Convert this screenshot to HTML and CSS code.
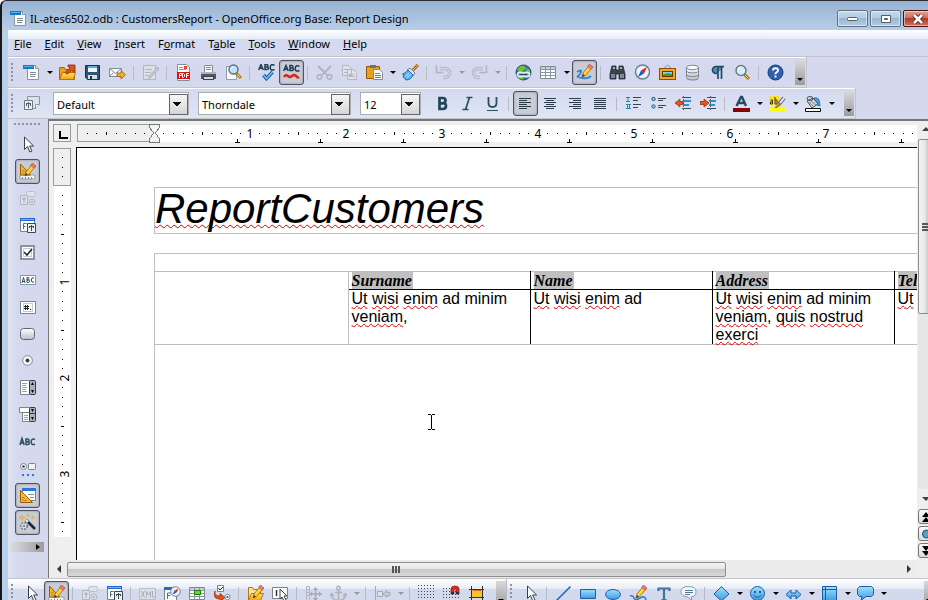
FILE: index.html
```html
<!DOCTYPE html>
<html lang="en">
<head>
  <meta charset="UTF-8">
  <meta name="viewport" content="width=device-width, initial-scale=1.0">
  <title>IL-ates6502.odb : CustomersReport - OpenOffice.org Base: Report Design</title>
  <link rel="stylesheet" href="styles.css">
</head>
<body>

<!-- icon sprite, 17x17 grid -->
<svg class="sprite" xmlns="http://www.w3.org/2000/svg" aria-hidden="true">
  <defs>
    <linearGradient id="g-blue" x1="0" y1="0" x2="0" y2="1"><stop offset="0" stop-color="#9fe0fb"/><stop offset="1" stop-color="#3a9be6"/></linearGradient>
    <linearGradient id="g-gold" x1="0" y1="0" x2="0" y2="1"><stop offset="0" stop-color="#ffe27a"/><stop offset="1" stop-color="#f2a30c"/></linearGradient>
    <linearGradient id="g-grey" x1="0" y1="0" x2="0" y2="1"><stop offset="0" stop-color="#ffffff"/><stop offset="1" stop-color="#b8bfc6"/></linearGradient>
    <pattern id="dots" width="3" height="3" patternUnits="userSpaceOnUse"><rect width="1" height="1" fill="#34495a"/></pattern>
  </defs>

  <symbol id="doc" viewBox="0 0 17 17"><path d="M4.500 1.500h8l3 3v11h-11z" fill="#fbfbfb" stroke="#8796a2"/><path d="M12.500 1.500v3h3" fill="#dfe4e8" stroke="#8796a2"/><path d="M7 8.500h6M7 10.500h6M7 12.500h5" stroke="#7f8d98"/><path d="M0 1h11v4H0z" fill="#1678c2"/><path d="M1 2h9v1H1z" fill="#58b4ee"/></symbol>
  <symbol id="open" viewBox="0 0 17 17"><path d="M.500 15.500V3.500h5l1 2h9v10z" fill="#f0a018" stroke="#a8640a"/><path d="M.500 15.500l3-7h13l-2 7z" fill="url(#g-gold)" stroke="#b9720c"/><path d="M7 9.500L6.500 8 11 4 9 2.500V1h7v7h-1.500L13 6l-4.500 4z" fill="#e4521b" stroke="#8c2206" stroke-width=".8"/></symbol>
  <symbol id="save" viewBox="0 0 17 17"><path d="M1.500 1.500h14v14h-12l-2-2z" fill="#2e5578" stroke="#16304a"/><path d="M4 2h9v6H4z" fill="#eef4f9"/><path d="M4 2h9v2H4z" fill="#5aa9e0"/><path d="M4 11h9v4H4z" fill="#d6dde3"/><path d="M6 12h2v3H6z" fill="#16304a"/></symbol>
  <symbol id="mail" viewBox="0 0 17 17"><path d="M.500 4.500h12v8H.500z" fill="#fbfbfb" stroke="#7f909c"/><path d="M.500 4.500l6 5 6-5M.500 12.500l4-4M12.500 12.500l-4-4" fill="none" stroke="#7f909c"/><path d="M8 9h4V6.500l4.500 4.300L12 15v-2.500H8z" fill="#f6ad25" stroke="#9a5c07" stroke-width=".8"/></symbol>
  <symbol id="edit-off" viewBox="0 0 17 17"><path d="M1.500 1.500h12v14h-12z" fill="#dcdfe8" stroke="#b2b6c1"/><path d="M3 5.500h7M3 8.500h6M3 11.500h4" stroke="#b2b6c1"/><path d="M15.500 3l-8 9-1 2.500L9 13l8-8z" fill="#c9ccd5" stroke="#a2a6b0" stroke-width=".8"/></symbol>
  <symbol id="pdf" viewBox="0 0 17 17"><path d="M2.500.500h9l3 3v13h-12z" fill="#fdfdfd" stroke="#80909b"/><path d="M4 3.500h4M4 5.500h7" stroke="#8796a2"/><path d="M9 2h3v3H9z" fill="#d94c2c"/><path d="M2 8h13v7H2z" fill="#d8140c"/><path d="M4.500 14V9.500h2v2h-2M7.500 13.500v-4h1l1 1v2l-1 1zM11.500 14V9.500h2.500M11.500 11.500h2" fill="none" stroke="#fff"/></symbol>
  <symbol id="print" viewBox="0 0 17 17"><path d="M4.500 1.500h8v7h-8z" fill="#fff" stroke="#7f8d98"/><path d="M6 3.500h5M6 5.500h5" stroke="#4a9bd6"/><path d="M1 8h15v7H1z" fill="#4c5961"/><path d="M1 8h15v2H1z" fill="#a9b4bb"/><path d="M3 12h11v4H3z" fill="#3a464f"/><path d="M4 13h9v2H4z" fill="#d5dce1"/></symbol>
  <symbol id="preview" viewBox="0 0 17 17"><path d="M1.500 2.500h10v13h-10z" fill="#fafafa" stroke="#8e9ba5"/><path d="M11 9l5 5" stroke="#c07b12" stroke-width="3"/><path d="M11 9l4 4" stroke="#ffd257"/><circle cx="8.500" cy="5.500" r="4.500" fill="#bfe2f8" stroke="#59707f" stroke-width="1.400"/><path d="M6 5a3 3 0 0 1 3-2" stroke="#fff" fill="none"/></symbol>
  <symbol id="abc" viewBox="0 0 17 17"><g fill="none" stroke="#1d3d52" stroke-width="1.500"><path d="M.700 7L3 1.500 5.300 7M1.500 5.300h3M7 1.500v5h2q1.500 0 1.500-1.300T9 4H7h1.700Q10 4 9.900 2.700T8.500 1.600zM16.500 2.300q-4-2-4.200 2t4.200 2.200"/></g></symbol>
  <symbol id="spell" viewBox="0 0 17 17"><use href="#abc" y="-1"/><path d="M5.500 11l3 3.500 6-6.500" fill="none" stroke="#165a9c" stroke-width="3.500"/><path d="M5.500 11l3 3.500 6-6.500" fill="none" stroke="#6fc3f5" stroke-width="1.500"/></symbol>
  <symbol id="autospell" viewBox="0 0 17 17"><use href="#abc"/><path d="M1 13q2-3 4-1t4 0 4 0 3 1" fill="none" stroke="#e02418" stroke-width="2.500"/></symbol>
  <symbol id="cut" viewBox="0 0 17 17"><path d="M2 2l9 9M15 2l-9 9" stroke="#b0b4bf" stroke-width="1.800"/><circle cx="3.500" cy="13" r="2.300" fill="none" stroke="#b0b4bf" stroke-width="1.500"/><circle cx="13.500" cy="13" r="2.300" fill="none" stroke="#b0b4bf" stroke-width="1.500"/></symbol>
  <symbol id="copy" viewBox="0 0 17 17"><path d="M1.500 1.500h6l3 3v7h-9zM6.500 5.500h6l3 3v7h-9z" fill="#dfe2eb" stroke="#b2b6c1"/><path d="M3 5.500h4M3 8.500h3M8 10.500h5M8 12.500h6" stroke="#b2b6c1"/></symbol>
  <symbol id="paste" viewBox="0 0 17 17"><path d="M.500 2.500h13v12H.500z" fill="#e9a01c" stroke="#8d5a0b"/><path d="M4 1h6v3H4z" fill="#68747d"/><path d="M7.500 5.500h6l3 3v7h-9z" fill="#fff" stroke="#7f8d98"/><path d="M9 9.500h5M9 11.500h6M9 13.500h6" stroke="#3b8dcb"/></symbol>
  <symbol id="brush" viewBox="0 0 17 17"><path d="M16 1l-5 5" stroke="#a35c0a" stroke-width="3"/><path d="M16 1l-5 5" stroke="#ffc54a"/><path d="M8 4l5 5-2 3-6-6z" fill="#d7e3ec" stroke="#56748a" stroke-width=".8"/><path d="M6 6l5 5q-2 5-7 5-1-2-3-3l1-2-1.500-1Q4 9 6 6z" fill="#5cb3ec" stroke="#1c5e97" stroke-width=".9"/><path d="M3 13l4-4M5 14l4-4" stroke="#bfe5fb"/></symbol>
  <symbol id="undo" viewBox="0 0 17 17"><path d="M5 4.500h5a4.300 4.300 0 0 1 0 9H8" fill="none" stroke="#b0b4bf" stroke-width="3.400"/><path d="M5 4.500h5a4.300 4.300 0 0 1 0 9H8" fill="none" stroke="#d3d8e8" stroke-width="1.400"/><path d="M1.500 1.500v7h7" fill="none" stroke="#b0b4bf" stroke-width="1.600"/></symbol>
  <symbol id="redo" viewBox="0 0 17 17"><path d="M12 4.500H7a4.300 4.300 0 0 0 0 9h2" fill="none" stroke="#b0b4bf" stroke-width="3.400"/><path d="M12 4.500H7a4.300 4.300 0 0 0 0 9h2" fill="none" stroke="#d3d8e8" stroke-width="1.400"/><path d="M15.500 1.500v7h-7" fill="none" stroke="#b0b4bf" stroke-width="1.600"/></symbol>
  <symbol id="globe" viewBox="0 0 17 17"><circle cx="8.500" cy="8.500" r="7.500" fill="#3579a6" stroke="#1e4b68"/><path d="M2 6q3-5 7-4l2 2-3 3-3 1zM11 4l4 2v3l-3-1zM5 12l4 1-1 2.500q-4 0-5-3z" fill="#6fbf3a"/><rect x="2.500" y="8.500" width="6" height="4" rx="2" fill="none" stroke="#e9eef1" stroke-width="1.800"/><rect x="8.500" y="8.500" width="6" height="4" rx="2" fill="none" stroke="#e9eef1" stroke-width="1.800"/><path d="M6 10.500h5" stroke="#26414f" stroke-width="1.400"/></symbol>
  <symbol id="table" viewBox="0 0 17 17"><path d="M.500 2.500h15v12H.500z" fill="#fff" stroke="#7a8994"/><path d="M1 3h14v2H1z" fill="#c6d0d8"/><path d="M.500 5.500h15M.500 8.500h15M.500 11.500h15M5.500 2.500v12M10.500 2.500v12" stroke="#8796a2"/></symbol>
  <symbol id="pencil" viewBox="0 0 17 17"><path d="M13.500 1l3 2.500-7 8-3.500 1.500L7 9z" fill="#ffd23c" stroke="#8f6410" stroke-width=".8"/><path d="M13.500 0l3.500 3-2 2.300-3.500-3z" fill="#e87a74" stroke="#a33" stroke-width=".5"/><path d="M6 13l1-3 2 1.500z" fill="#3a3a3a"/></symbol>
  <symbol id="draw" viewBox="0 0 17 17"><path d="M1 8q5-3 4 0t-3 4 4 2 9-2" fill="none" stroke="#2e86d9" stroke-width="1.800"/><use href="#pencil"/></symbol>
  <symbol id="find" viewBox="0 0 17 17"><path d="M3 2h4v4h3V2h4l2 8v5h-6v-5H7v5H1v-5z" fill="#39434a" stroke="#1f272c" stroke-width=".8"/><path d="M2 10h4v4H2zM11 10h4v4h-4z" fill="#7d8b94"/><path d="M4 3h2v2H4zM11 3h2v2h-2z" fill="#aab5bc"/></symbol>
  <symbol id="compass" viewBox="0 0 17 17"><circle cx="8.500" cy="8" r="7" fill="#e7f2fa" stroke="#6d8292" stroke-width="1.500"/><path d="M13 3L7 6.500 10 9.500z" fill="#ec1b12"/><path d="M4 13l3-6.500 3 3z" fill="#1e52c8"/></symbol>
  <symbol id="gallery" viewBox="0 0 17 17"><path d="M5 4l3.500-3L12 4" fill="none" stroke="#8898a3"/><path d="M0 4h17v12H0z" fill="#8f4d06"/><path d="M1 5h15v10H1z" fill="#f2a72a"/><path d="M3 7h11v6H3z" fill="#5f3a0a"/><path d="M4 8h9v4H4z" fill="#8ed0f5"/><path d="M4 10.500q4-2 9-.500v2H4z" fill="#3f9a34"/></symbol>
  <symbol id="database" viewBox="0 0 17 17"><path d="M2.500 3.500v10q0 2.500 6 2.500t6-2.500v-10" fill="url(#g-grey)" stroke="#7a858e"/><ellipse cx="8.500" cy="3.500" rx="6" ry="2.200" fill="#fafbfc" stroke="#7a858e"/><path d="M2.500 7q0 2 6 2t6-2M2.500 10.500q0 2 6 2t6-2" fill="none" stroke="#7a858e"/></symbol>
  <symbol id="pilcrow" viewBox="0 0 17 17"><path d="M15 2.500H7a3.500 3.500 0 0 0 0 7h1M9 2v13M12.500 2v13" fill="#4d8fb5" stroke="#1f4964" stroke-width="1.700"/></symbol>
  <symbol id="zoom" viewBox="0 0 17 17"><path d="M10 10l5 5" stroke="#a8700e" stroke-width="3"/><path d="M11 11l3.500 3.500" stroke="#ffd654"/><circle cx="7" cy="6.500" r="5" fill="#d5eefc" stroke="#667d8d" stroke-width="1.500"/><path d="M4 6a3 3 0 0 1 3-3" fill="none" stroke="#fff"/></symbol>
  <symbol id="help" viewBox="0 0 17 17"><circle cx="8.500" cy="8.500" r="7.500" fill="#2f5fae" stroke="#173a78"/><path d="M6 6.500q0-2.300 2.600-2.300T11 6.300q0 1.300-1.400 2T8.500 10.300M8.500 11.500v2" fill="none" stroke="#fff" stroke-width="1.900"/></symbol>

  <symbol id="styles" viewBox="0 0 17 17"><path d="M4.500 1.500h12v8l-4 4h-8z" fill="#dde1e8" stroke="#8796a2"/><path d="M12.500 13.500v-4h4" fill="#fff" stroke="#8796a2"/><path d="M1.500 5.500h8v9h-8z" fill="#eceff2" stroke="#6b7a85"/><path d="M5.500 7v6M3 8.500h5M3.500 8v3M7.500 8v3" stroke="#54646f"/></symbol>
  <symbol id="bold" viewBox="0 0 17 17"><path d="M5.500 3v11h3q3.500 0 3.500-3T9 8.300H5.500h3q3 0 3-2.700T8.500 3z" fill="none" stroke="#22445a" stroke-width="2.700"/></symbol>
  <symbol id="italic" viewBox="0 0 17 17"><path d="M7.500 2.500h6M3.500 14.500h6M10.500 2.500l-4 12" fill="none" stroke="#2d4d62" stroke-width="1.700"/></symbol>
  <symbol id="underline" viewBox="0 0 17 17"><path d="M4.500 2v6q0 4 4 4t4-4V2" fill="none" stroke="#2d4d62" stroke-width="1.800"/><path d="M3 15.500h11" stroke="#2d4d62"/></symbol>
  <symbol id="al" viewBox="0 0 17 17"><path d="M2 3.500h12M2 5.500h8M2 7.500h12M2 9.500h8M2 11.500h12M2 13.500h8" stroke="#2c3c48"/></symbol>
  <symbol id="ac" viewBox="0 0 17 17"><path d="M2 3.500h12M4 5.500h8M2 7.500h12M4 9.500h8M2 11.500h12M4 13.500h8" stroke="#2c3c48"/></symbol>
  <symbol id="ar" viewBox="0 0 17 17"><path d="M2 3.500h12M6 5.500h8M2 7.500h12M6 9.500h8M2 11.500h12M6 13.500h8" stroke="#2c3c48"/></symbol>
  <symbol id="aj" viewBox="0 0 17 17"><path d="M2 3.500h12M2 5.500h12M2 7.500h12M2 9.500h12M2 11.500h12M2 13.500h12" stroke="#2c3c48"/></symbol>
  <symbol id="numbering" viewBox="0 0 17 17"><path d="M1 2.500h4M1 6.500h4M3 2.500v4M1 9.500h5M1 13.500h5M2.500 9.500v4M4.500 9.500v4" stroke="#387ea8"/><path d="M8 2.500h8M8 5.500h5M8 9.500h8M8 12.500h5" stroke="#3d4750"/></symbol>
  <symbol id="bullets" viewBox="0 0 17 17"><circle cx="3.500" cy="4" r="1.700" fill="#9dcbe5" stroke="#235a80"/><circle cx="3.500" cy="11.500" r="1.700" fill="#9dcbe5" stroke="#235a80"/><path d="M8 3.500h8M8 5.500h5M8 10.500h8M8 12.500h5" stroke="#3d4750"/></symbol>
  <symbol id="outdent" viewBox="0 0 17 17"><path d="M7 2.500h9M7 13.500h9" stroke="#3d4750"/><path d="M8 6h8M8 10h6" stroke="#2a93d5" stroke-width="2"/><path d="M8.500 1v15" stroke="#53626d" stroke-dasharray="2 1"/><path d="M8 6.500H5V4L0 8l5 4V9.500h3z" fill="#e35420" stroke="#8c2a08" stroke-width=".7"/></symbol>
  <symbol id="indent" viewBox="0 0 17 17"><path d="M7 2.500h9M7 13.500h9" stroke="#3d4750"/><path d="M9 6h7M9 10h6" stroke="#2a93d5" stroke-width="2"/><path d="M10.500 1v15" stroke="#53626d" stroke-dasharray="2 1"/><path d="M0 6.500h4V4l5 4-5 4V9.500H0z" fill="#e35420" stroke="#8c2a08" stroke-width=".7"/></symbol>
  <symbol id="fontcolor" viewBox="0 0 17 17"><path d="M3.500 11L8 2h1l4 9M5.500 8h6" fill="none" stroke="#254b64" stroke-width="2.400"/><path d="M0 13h17v4H0z" fill="#8b0008"/></symbol>
  <symbol id="highlight" viewBox="0 0 17 17"><path d="M0 1h10v9H0z" fill="#ffdf2e"/><path d="M1.500 5h2v4h-2V7h2M6 2v7h2V5H6" fill="none" stroke="#3b3b22"/><path d="M15 3l-5 6" stroke="#62707a" stroke-width="4"/><path d="M15 3l-4 5" stroke="#e8eef2" stroke-width="2"/><path d="M10 8l2 2-4 3-3 0z" fill="#c2760e"/><path d="M0 13h16v4H0z" fill="#ffff00"/></symbol>
  <symbol id="bucket" viewBox="0 0 17 17"><path d="M9 3q6-2 6 8l-3-1q0-4-3-5z" fill="#3f9ede" stroke="#1f5f92" stroke-width=".7"/><path d="M2 6l6-3 5 6-6 4z" fill="#cfd7dd" stroke="#46535d"/><ellipse cx="5" cy="3.500" rx="3" ry="2" fill="none" stroke="#46535d"/><path d="M4 7l5 5M6 6l5 4" stroke="#7c8a94"/><path d="M.500 13.500h15v3H.500z" fill="#fff" stroke="#111"/></symbol>

  <symbol id="pointer" viewBox="0 0 17 17"><path d="M5.500 1v12.500l3-3 2.300 5.500 2.200-1-2.400-5h4z" fill="#fff" stroke="#34424d"/></symbol>
  <symbol id="design" viewBox="0 0 17 17"><path d="M1 12h15v4H1z" fill="#f3f5f6" stroke="#81909a" stroke-width=".8"/><path d="M3.500 14v2M6.500 14v2M9.500 14v2M12.500 14v2" stroke="#81909a"/><path d="M1.500 12V1l10 11z" fill="#f8b424" stroke="#9a5d06"/><path d="M4 7v3h3z" fill="#f3e6c4" stroke="#9a5d06" stroke-width=".6"/><use href="#pencil"/></symbol>
  <symbol id="control-off" viewBox="0 0 17 17"><rect x="7.500" y="1.500" width="9" height="5" rx="2" fill="#dfe2eb" stroke="#bcc0cb"/><path d="M1.500 5.500h7v9h-7z" fill="#dfe2eb" stroke="#b2b6c1"/><path d="M5 7v6M3 9h4" stroke="#a5a9b5"/><circle cx="13" cy="12" r="2.800" fill="#dfe2eb" stroke="#b2b6c1"/><circle cx="13" cy="12" r="1" fill="#a5a9b5"/></symbol>
  <symbol id="form" viewBox="0 0 17 17"><path d="M1.500 2.500h14v12h-14z" fill="#fafbfc" stroke="#77858f"/><path d="M1 1h15v3H1z" fill="#2667cf"/><path d="M2 2h13v1H2z" fill="#78b2ff"/><path d="M4.500 12V6.500h3M4.500 9.500h2" fill="none" stroke="#5c6a75"/><path d="M8.500 6.500h8v9h-8z" fill="#eef1f4" stroke="#3a4852"/><path d="M12.500 8v6M10 9.500h5M10.500 9v2M14.500 9v2" stroke="#3a4852"/></symbol>
  <symbol id="check" viewBox="0 0 17 17"><path d="M2 2h13v13H2z" fill="#fff" stroke="#8796a2" stroke-width="2"/><path d="M4.500 4.500h8v8h-8z" fill="#fff" stroke="#c3cbd1"/><path d="M5 8l3 3 5-6" fill="none" stroke="#1c262e" stroke-width="1.600"/></symbol>
  <symbol id="textfield" viewBox="0 0 17 17"><path d="M1.500 4.500h15v9h-15z" fill="#fff" stroke="#8796a2"/><g fill="none" stroke="#2d4d62"><path d="M3 12l1.500-5.500L6 12M3.500 10.500H6M8 6.500v5h1.500q1 0 1-1.300T9.500 9H8h1q1 0 1-1.300t-1-1.200zM15 7q-2.700-1-2.700 2t2.700 2"/></g></symbol>
  <symbol id="formatted" viewBox="0 0 17 17"><path d="M1.500 3.500h15v12h-15z" fill="#fff" stroke="#75848f"/><path d="M4.500 5.500h9v8h-9z" fill="#fff" stroke="#c3cbd1"/><path d="M6.500 7v5M8.500 7v5M5 8.500h5M5 10.500h5M11 11.500h1" stroke="#222"/></symbol>
  <symbol id="pushbutton" viewBox="0 0 17 17"><rect x="1.500" y="3.500" width="14" height="11" rx="3" fill="url(#g-grey)" stroke="#5b6872"/></symbol>
  <symbol id="radio" viewBox="0 0 17 17"><circle cx="8.500" cy="8.500" r="4.800" fill="#fff" stroke="#77858f"/><circle cx="8.500" cy="8.500" r="2" fill="#33414c"/></symbol>
  <symbol id="listbox" viewBox="0 0 17 17"><path d="M1.500 1.500h9v14h-9z" fill="#fff" stroke="#77858f"/><path d="M3 4.500h5M3 6.500h4M3 8.500h5M3 10.500h4M3 12.500h5" stroke="#98a4ad"/><rect x="10.500" y="1.500" width="6" height="14" rx="1" fill="#a9b3ba" stroke="#2f3b44"/><path d="M12 6l1.500-3L15 6zM12 11l1.500 3L15 11z" fill="#000"/></symbol>
  <symbol id="combobox" viewBox="0 0 17 17"><path d="M3.500 6.500h8v9h-8z" fill="#fff" stroke="#77858f"/><path d="M5 9.500h4M5 11.500h4M5 13.500h4" stroke="#98a4ad"/><path d="M.500 1.500h10v5H.500z" fill="#fff" stroke="#77858f"/><rect x="10.500" y="1.500" width="6" height="14" rx="1" fill="#a9b3ba" stroke="#2f3b44"/><path d="M12 3l1.500 3L15 3zM12 11l1.500 3L15 11z" fill="#000"/><path d="M11 7.500h5" stroke="#2f3b44"/></symbol>
  <symbol id="label" viewBox="0 0 17 17"><g fill="none" stroke="#2d4d62" stroke-width="1.500"><path d="M1 12l2-6.500L5.200 12M1.800 10h3M7 6v5.500h1.800q1.500 0 1.500-1.500T8.800 8.700H7h1.500q1.500 0 1.500-1.400T8.500 6zM16 6.500q-3.800-1.500-3.800 2.300T16 11.200"/></g></symbol>
  <symbol id="morecontrols" viewBox="0 0 17 17"><circle cx="4.500" cy="6.500" r="3" fill="#fff" stroke="#77858f"/><circle cx="4.500" cy="6.500" r="1.300" fill="#33414c"/><rect x="9.500" y="3.500" width="7" height="6" rx="1" fill="#f1f3f5" stroke="#77858f"/><path d="M3 14h2v2H3zM8 14h2v2H8zM13 14h2v2h-2z" fill="#2a78e4"/></symbol>
  <symbol id="formdesign" viewBox="0 0 17 17"><path d="M3.500 1.500h13v12h-13z" fill="#fafbfc" stroke="#77858f"/><path d="M3 1h14v3H3z" fill="#2e74da"/><path d="M9 7.500h6M11 10.500h4" stroke="#8796a2"/><path d="M1.500 15.500V3.500l12 12z" fill="#fbb92b" stroke="#9a5d06"/><path d="M4 10v3.500h3.500z" fill="#f4f4f4" stroke="#9a5d06" stroke-width=".7"/></symbol>
  <symbol id="wizard" viewBox="0 0 17 17"><path d="M7 6l9 9" stroke="#20272c" stroke-width="2.600"/><path d="M7 6l2 2" stroke="#f4f4f4" stroke-width="2"/><circle cx="5" cy="12" r="3.200" fill="#e4e8eb" stroke="#7d8a94" stroke-width="2" stroke-dasharray="2 1"/><circle cx="5" cy="12" r="1" fill="#56636d"/><path d="M3 1l1 2 2 .500-2 1-1 2-1-2-2-1L2 3zM9 0l1 1.500L9 3 8 1.500zM14 2l1.500 1.500L14 5l-1.500-1.500z" fill="#ffc21c" stroke="#d98d08" stroke-width=".4"/></symbol>

  <symbol id="xml" viewBox="0 0 17 17"><path d="M.500 3.500h16v11H.500z" fill="#dcdfe8" stroke="#b8bcc7"/><path d="M2.500 6l3 6.500M5.500 6l-3 6.500M7.500 12.500V6.500L9.500 10l2-3.500v6M13.500 6v6h2.500" fill="none" stroke="#abafba"/></symbol>
  <symbol id="navigator" viewBox="0 0 17 17"><path d="M.500 2.500h12v13H.500z" fill="#fafbfc" stroke="#77858f"/><path d="M0 2h11v3H0z" fill="#2667cf"/><path d="M3.500 14V8h4M3.500 10.500h3" fill="none" stroke="#5c6a75"/><circle cx="11.500" cy="6.500" r="4.800" fill="#eaf4fb" stroke="#6d8292"/><path d="M14.500 3.500L10.500 5.500 12.500 7.500z" fill="#ec1b12"/><path d="M8.500 9.500l2-4 2 2z" fill="#1e52c8"/></symbol>
  <symbol id="addfield" viewBox="0 0 17 17"><use href="#table"/><path d="M5.500 5.500h6v4h-6z" fill="#62e01d" stroke="#1f7d10"/></symbol>
  <symbol id="order" viewBox="0 0 17 17"><path d="M3.500.500h6v6h-6z" fill="#fff" stroke="#77858f"/><path d="M4.500 3l1.500 2 3-3" fill="none" stroke="#222"/><circle cx="13.500" cy="12" r="2.700" fill="#fff" stroke="#77858f"/><circle cx="13.500" cy="12" r="1.100" fill="#33414c"/><path d="M1 6q-1 5 5 5V8.500l5 4-5 4V14Q-2 14 1 6z" fill="#e8501b" stroke="#8c2a08" stroke-width=".7"/></symbol>
  <symbol id="opendesign" viewBox="0 0 17 17"><path d="M1.500 15.500v-13h4l1 2h7v11z" fill="#fbe29a" stroke="#b9720c"/><path d="M1.500 15.500l3-7h12l-3 7z" fill="url(#g-gold)" stroke="#b9720c"/><use href="#pencil"/></symbol>
  <symbol id="autofocus" viewBox="0 0 17 17"><path d="M.500 2.500h15v11H.500z" fill="#fff" stroke="#77858f"/><path d="M4.500 5v6" stroke="#333" stroke-width="1.500"/><path d="M8 4v10l2-2 2 4 2-1-2-4h3z" fill="#fff" stroke="#34424d"/></symbol>
  <symbol id="position" viewBox="0 0 17 17"><path d="M1.500 1.500h3v14h-3zM2 4.500h2M2 7.500h2M2 10.500h2" fill="none" stroke="#b2b6c1"/><path d="M10.500 3v12M5 9h12" stroke="#a5a9b5" stroke-width="1.500"/><path d="M8 5l2.500-3L13 5zM8 13l2.500 3 2.500-3zM7 6.500L4.500 9 7 11.500zM14 6.500L16.500 9 14 11.500z" fill="#a5a9b5"/></symbol>
  <symbol id="anchor" viewBox="0 0 17 17"><circle cx="8.500" cy="3" r="1.800" fill="none" stroke="#b0b4bf" stroke-width="1.500"/><path d="M8.500 5v11M5 7.500h7M1.500 9q0 6 7 6.500 7-.500 7-6.500M0 11l1.500-2.500L4 11M13 11l2.500-2.500L17 11" fill="none" stroke="#b0b4bf" stroke-width="1.600"/></symbol>
  <symbol id="align" viewBox="0 0 17 17"><path d="M1.500 1v15" stroke="#a5a9b5"/><path d="M3.500 6.500h5v5h-5z" fill="#dfe2eb" stroke="#a5a9b5"/><path d="M16 7.500h-3v-2l-4 3.500 4 3.500v-2h3z" fill="#c8ccd6" stroke="#a5a9b5"/></symbol>
  <symbol id="grid" viewBox="0 0 17 17"><path d="M0 0h17v17H0z" fill="url(#dots)"/></symbol>
  <symbol id="snap" viewBox="0 0 17 17"><path d="M0 3h17v14H0z" fill="url(#dots)"/><path d="M8 9V4q0-3 4-3t4 3v5h-3V4h-2v5z" fill="#e42a18" stroke="#8f1008" stroke-width=".7"/><path d="M8 7h3v2H8zM13 7h3v2h-3z" fill="#26323b"/></symbol>
  <symbol id="guides" viewBox="0 0 17 17"><path d="M4 5h10v7H4z" fill="#fbc02d"/><path d="M3.500 1v15M14.500 1v15M1 4.500h15M1 12.500h15" stroke="#28343c"/><path d="M5 5.500h8" stroke="#d96b0c"/></symbol>
  <symbol id="line" viewBox="0 0 17 17"><path d="M1.500 15.500l14-14" stroke="#1e6fc4" stroke-width="1.700"/></symbol>
  <symbol id="rect" viewBox="0 0 17 17"><path d="M.500 4.500h15v9H.500z" fill="url(#g-blue)" stroke="#1c5da6"/></symbol>
  <symbol id="ellipse" viewBox="0 0 17 17"><ellipse cx="8" cy="9.500" rx="7.500" ry="5" fill="url(#g-blue)" stroke="#1c5da6"/></symbol>
  <symbol id="freeform" viewBox="0 0 17 17"><path d="M0 11q3-1 4 2t6 0 6 2" fill="none" stroke="#2f7fc2" stroke-width="1.700"/><use href="#pencil"/></symbol>
  <symbol id="text" viewBox="0 0 17 17"><path d="M3.500 6V3.500h11V6M9 3.500v11M6.500 15h5" fill="none" stroke="#437596" stroke-width="2.200"/></symbol>
  <symbol id="callout" viewBox="0 0 17 17"><path d="M8.500 1.500q7.500 0 7.500 5t-5 5.500l1 4-4-4Q1 11.500 1 6.500t7.500-5z" fill="#f4f6f8" stroke="#8c99a3"/><path d="M5 5.500h8M5 7.500h8M5 9.500h5" stroke="#52799a"/></symbol>
  <symbol id="diamond" viewBox="0 0 17 17"><path d="M8.500 1.500L16 9l-7.500 7L1 9z" fill="url(#g-blue)" stroke="#1c5da6"/></symbol>
  <symbol id="smiley" viewBox="0 0 17 17"><circle cx="8.500" cy="8.500" r="7" fill="url(#g-blue)" stroke="#1c5da6"/><path d="M5 6h2v2H5zM10 6h2v2h-2z" fill="#1c5da6"/><path d="M4.500 10q4 4.500 8 0" fill="none" stroke="#1c5da6"/></symbol>
  <symbol id="arrows" viewBox="0 0 17 17"><path d="M1 9.500L6 5v3h5V5l5 4.500-5 4.500v-3H6v3z" fill="url(#g-blue)" stroke="#1c5da6"/></symbol>
  <symbol id="flow" viewBox="0 0 17 17"><path d="M1.500 1.500h14v15h-14z" fill="url(#g-blue)" stroke="#1c5da6"/><path d="M4.500 1.500v15M1.500 4.500h14" stroke="#1c5da6"/></symbol>
  <symbol id="bubble" viewBox="0 0 17 17"><path d="M2.500 1.500h12l2 2v6l-2 2H9l-5 4 1-4H2.500l-2-2v-6z" fill="url(#g-blue)" stroke="#1c5da6"/></symbol>
</svg>

<div class="window">
  <header class="titlebar">
    <svg class="app-icon"><use href="#doc"/></svg>
    <h1>IL-ates6502.odb : CustomersReport - OpenOffice.org Base: Report Design</h1>
    <div class="caption-buttons">
      <button aria-label="Minimize"><svg width="12" height="6"><rect x=".5" y="1.500" width="10" height="3" rx="1" fill="#fff" stroke="#535d6b"/></svg></button>
      <button aria-label="Maximize"><svg width="12" height="10"><path d="M1.500 1.500h9v7h-9z" fill="#fff" stroke="#535d6b"/><path d="M4.500 4.500h3v1h-3z" fill="#a0b6cd" stroke="#535d6b"/></svg></button>
      <button class="close" aria-label="Close"><svg width="12" height="10"><path d="M2 1l8 8M10 1L2 9" stroke="#5b2a2a" stroke-width="4.500"/><path d="M2 1l8 8M10 1L2 9" stroke="#fff" stroke-width="2.500"/></svg></button>
    </div>
  </header>

  <div class="client">
    <nav class="menubar">
      <button><u>F</u>ile</button>
      <button><u>E</u>dit</button>
      <button><u>V</u>iew</button>
      <button><u>I</u>nsert</button>
      <button>F<u>o</u>rmat</button>
      <button>T<u>a</u>ble</button>
      <button><u>T</u>ools</button>
      <button><u>W</u>indow</button>
      <button><u>H</u>elp</button>
    </nav>

    <div class="toolbar standard">
      <span class="grip"></span>
      <button class="tool" aria-label="New"><svg><use href="#doc"/></svg></button>
      <button class="drop" aria-label="New menu"></button>
      <button class="tool" aria-label="Open"><svg><use href="#open"/></svg></button>
      <button class="tool" aria-label="Save"><svg><use href="#save"/></svg></button>
      <button class="tool" aria-label="E-mail"><svg><use href="#mail"/></svg></button>
      <span class="sep"></span>
      <button class="tool" aria-label="Edit File" disabled><svg><use href="#edit-off"/></svg></button>
      <span class="sep"></span>
      <button class="tool" aria-label="Export as PDF"><svg><use href="#pdf"/></svg></button>
      <button class="tool" aria-label="Print"><svg><use href="#print"/></svg></button>
      <button class="tool" aria-label="Page Preview"><svg><use href="#preview"/></svg></button>
      <span class="sep"></span>
      <button class="tool" aria-label="Spellcheck"><svg><use href="#spell"/></svg></button>
      <button class="tool pressed" aria-label="AutoSpellcheck"><svg><use href="#autospell"/></svg></button>
      <span class="sep"></span>
      <button class="tool" aria-label="Cut" disabled><svg><use href="#cut"/></svg></button>
      <button class="tool" aria-label="Copy" disabled><svg><use href="#copy"/></svg></button>
      <button class="tool" aria-label="Paste"><svg><use href="#paste"/></svg></button>
      <button class="drop" aria-label="Paste menu"></button>
      <button class="tool" aria-label="Format Paintbrush"><svg><use href="#brush"/></svg></button>
      <span class="sep"></span>
      <button class="tool" aria-label="Undo" disabled><svg><use href="#undo"/></svg></button>
      <button class="drop" aria-label="Undo list" disabled></button>
      <button class="tool" aria-label="Redo" disabled><svg><use href="#redo"/></svg></button>
      <button class="drop" aria-label="Redo list" disabled></button>
      <span class="sep"></span>
      <button class="tool" aria-label="Hyperlink"><svg><use href="#globe"/></svg></button>
      <button class="tool" aria-label="Table"><svg><use href="#table"/></svg></button>
      <button class="drop" aria-label="Table menu"></button>
      <button class="tool pressed" aria-label="Show Draw Functions"><svg><use href="#draw"/></svg></button>
      <span class="sep"></span>
      <button class="tool" aria-label="Find and Replace"><svg><use href="#find"/></svg></button>
      <button class="tool" aria-label="Navigator"><svg><use href="#compass"/></svg></button>
      <button class="tool" aria-label="Gallery"><svg><use href="#gallery"/></svg></button>
      <button class="tool" aria-label="Data Sources"><svg><use href="#database"/></svg></button>
      <button class="tool" aria-label="Nonprinting Characters"><svg><use href="#pilcrow"/></svg></button>
      <button class="tool" aria-label="Zoom"><svg><use href="#zoom"/></svg></button>
      <span class="sep"></span>
      <button class="tool" aria-label="Help"><svg><use href="#help"/></svg></button>
      <button class="more" aria-label="Toolbar options"></button>
    </div>

    <div class="toolbar formatting">
      <span class="grip"></span>
      <button class="tool" aria-label="Styles and Formatting"><svg><use href="#styles"/></svg></button>
      <span class="combo combo-style"><select aria-label="Apply Style"><option>Default</option><option>Heading 1</option></select></span>
      <span class="combo combo-font"><select aria-label="Font Name"><option>Thorndale</option><option>Albany</option></select></span>
      <span class="combo combo-size"><select aria-label="Font Size"><option>12</option><option>14</option></select></span>
      <button class="tool" aria-label="Bold"><svg><use href="#bold"/></svg></button>
      <button class="tool" aria-label="Italic"><svg><use href="#italic"/></svg></button>
      <button class="tool" aria-label="Underline"><svg><use href="#underline"/></svg></button>
      <span class="sep"></span>
      <button class="tool pressed" aria-label="Align Left"><svg><use href="#al"/></svg></button>
      <button class="tool" aria-label="Centered"><svg><use href="#ac"/></svg></button>
      <button class="tool" aria-label="Align Right"><svg><use href="#ar"/></svg></button>
      <button class="tool" aria-label="Justified"><svg><use href="#aj"/></svg></button>
      <span class="sep"></span>
      <button class="tool" aria-label="Numbering"><svg><use href="#numbering"/></svg></button>
      <button class="tool" aria-label="Bullets"><svg><use href="#bullets"/></svg></button>
      <button class="tool" aria-label="Decrease Indent"><svg><use href="#outdent"/></svg></button>
      <button class="tool" aria-label="Increase Indent"><svg><use href="#indent"/></svg></button>
      <span class="sep"></span>
      <button class="tool" aria-label="Font Color"><svg><use href="#fontcolor"/></svg></button>
      <button class="drop" aria-label="Font Color menu"></button>
      <button class="tool" aria-label="Highlighting"><svg><use href="#highlight"/></svg></button>
      <button class="drop" aria-label="Highlighting menu"></button>
      <button class="tool" aria-label="Background Color"><svg><use href="#bucket"/></svg></button>
      <button class="drop" aria-label="Background Color menu"></button>
      <button class="more" aria-label="Toolbar options"></button>
    </div>

    <div class="main">
      <aside class="controls">
        <span class="grip-h"></span>
        <button class="tool" aria-label="Select"><svg><use href="#pointer"/></svg></button>
        <button class="tool pressed" aria-label="Design Mode"><svg><use href="#design"/></svg></button>
        <button class="tool" aria-label="Control" disabled><svg><use href="#control-off"/></svg></button>
        <button class="tool" aria-label="Form"><svg><use href="#form"/></svg></button>
        <button class="tool" aria-label="Check Box"><svg><use href="#check"/></svg></button>
        <button class="tool" aria-label="Text Box"><svg><use href="#textfield"/></svg></button>
        <button class="tool" aria-label="Formatted Field"><svg><use href="#formatted"/></svg></button>
        <button class="tool" aria-label="Push Button"><svg><use href="#pushbutton"/></svg></button>
        <button class="tool" aria-label="Option Button"><svg><use href="#radio"/></svg></button>
        <button class="tool" aria-label="List Box"><svg><use href="#listbox"/></svg></button>
        <button class="tool" aria-label="Combo Box"><svg><use href="#combobox"/></svg></button>
        <button class="tool" aria-label="Label Field"><svg><use href="#label"/></svg></button>
        <button class="tool" aria-label="More Controls"><svg><use href="#morecontrols"/></svg></button>
        <button class="tool pressed" aria-label="Form Design"><svg><use href="#formdesign"/></svg></button>
        <button class="tool pressed" aria-label="Wizards On/Off"><svg><use href="#wizard"/></svg></button>
        <button class="more-h" aria-label="Toolbar options"></button>
      </aside>

      <div class="workspace">
        <div class="corner">
          <button class="tab-type" aria-label="Tab type"></button>
        </div>

        <svg class="ruler-h">
          <defs>
            <pattern id="h-marks" x="78" width="96" height="26" patternUnits="userSpaceOnUse">
              <path d="M9 12.500h1M19 12.500h1M29 12.500h1M38 12.500h1M58 12.500h1M67 12.500h1M77 12.500h1M86 12.500h1M48.500 11v3" stroke="#000"/>
            </pattern>
            <pattern id="h-tabs" x="120" width="83" height="26" patternUnits="userSpaceOnUse">
              <path d="M39 21.500h5M41.500 18v3" stroke="#000"/>
            </pattern>
          </defs>
          <rect x="78" y="4" width="100%" height="17" fill="#fff"/>
          <rect x="1.500" y="3.500" width="77" height="17" fill="#efefef" stroke="#9b9b9b"/>
          <rect x="8" width="100%" height="26" fill="url(#h-marks)"/>
          <rect x="120" width="100%" height="26" fill="url(#h-tabs)"/>
          <path d="M73.500 3.500h10v3l-4 5.500 4 6v3h-10v-3l4-6-4-5.500z" fill="#f4f4f4" stroke="#777"/>
          <g class="ruler-text">
            <text x="174" y="17">1</text><text x="270" y="17">2</text><text x="366" y="17">3</text><text x="462" y="17">4</text>
            <text x="558" y="17">5</text><text x="654" y="17">6</text><text x="750" y="17">7</text>
          </g>
        </svg>

        <div class="scroll-v">
          <button class="arrow up" aria-label="Scroll up"></button>
          <div class="track"><div class="thumb"></div></div>
          <button class="arrow down" aria-label="Scroll down"></button>
          <button class="page-nav" aria-label="Previous page"><svg width="14" height="12"><path d="M3 6l4-5 4 5zM3 11l4-5 4 5z" fill="#000"/></svg></button>
          <button class="page-nav" aria-label="Navigation"><svg width="14" height="12"><circle cx="7.500" cy="6" r="4" fill="#5b9fc9" stroke="#1e4b68"/></svg></button>
          <button class="page-nav" aria-label="Next page"><svg width="14" height="12"><path d="M3 1l4 5 4-5zM3 6l4 5 4-5z" fill="#000"/></svg></button>
        </div>

        <div class="ruler-side">
          <svg class="ruler-v">
            <defs>
              <pattern id="v-marks" y="39" width="27" height="96" patternUnits="userSpaceOnUse">
                <path d="M13 9.500h1M13 19.500h1M13 28.500h1M13 38.500h1M13 57.500h1M13 67.500h1M13 77.500h1M13 86.500h1M12 48.500h3" stroke="#000"/>
              </pattern>
            </defs>
            <rect x="5" y="39" width="17" height="100%" fill="#fff"/>
            <rect x="4.500" y="1.500" width="17" height="37" fill="#efefef" stroke="#9b9b9b"/>
            <rect y="8" width="27" height="100%" fill="url(#v-marks)"/>
            <g class="ruler-text">
              <text transform="translate(20 135) rotate(-90)">1</text>
              <text transform="translate(20 231) rotate(-90)">2</text>
              <text transform="translate(20 327) rotate(-90)">3</text>
            </g>
          </svg>
        </div>

        <main class="document">
          <h2 class="report-title"><span class="misspelled">ReportCustomers</span></h2>
          <section class="report-body">
            <table class="records">
              <colgroup><col class="indent-col"><col><col><col><col></colgroup>
              <thead>
                <tr>
                  <td class="blank" rowspan="2"></td>
                  <th><span>Surname</span></th>
                  <th><span>Name</span></th>
                  <th><span>Address</span></th>
                  <th><span>Telephone</span></th>
                </tr>
                <tr class="sample">
                  <td><i>Ut</i> <i>wisi</i> <i>enim</i> ad minim <i>veniam</i>,</td>
                  <td><i>Ut</i> <i>wisi</i> <i>enim</i> ad</td>
                  <td><i>Ut</i> <i>wisi</i> <i>enim</i> ad minim <i>veniam</i>, <i>quis</i> <i>nostrud</i> <i>exerci</i></td>
                  <td><i>Ut</i></td>
                </tr>
              </thead>
            </table>
          </section>
          <svg class="text-cursor" width="9" height="17"><path d="M1 .500h3M5 .500h3M4.500 1v14M1 15.500h3M5 15.500h3" stroke="#000"/></svg>
        </main>

        <div class="scroll-h">
          <button class="arrow left" aria-label="Scroll left"></button>
          <div class="track"><div class="thumb"></div></div>
          <button class="arrow right" aria-label="Scroll right"></button>
        </div>
      </div>
    </div>

    <footer class="bottombars">
      <div class="bar">
        <span class="grip"></span>
        <button class="tool" aria-label="Select"><svg><use href="#pointer"/></svg></button>
        <button class="tool pressed" aria-label="Design Mode"><svg><use href="#design"/></svg></button>
        <span class="sep"></span>
        <button class="tool" aria-label="Control" disabled><svg><use href="#control-off"/></svg></button>
        <button class="tool" aria-label="Form"><svg><use href="#form"/></svg></button>
        <span class="sep"></span>
        <button class="tool" aria-label="XML Form" disabled><svg><use href="#xml"/></svg></button>
        <button class="tool" aria-label="Form Navigator"><svg><use href="#navigator"/></svg></button>
        <button class="tool" aria-label="Add Field"><svg><use href="#addfield"/></svg></button>
        <button class="tool" aria-label="Activation Order"><svg><use href="#order"/></svg></button>
        <span class="sep"></span>
        <button class="tool" aria-label="Open in Design Mode"><svg><use href="#opendesign"/></svg></button>
        <button class="tool" aria-label="Automatic Control Focus"><svg><use href="#autofocus"/></svg></button>
        <span class="sep"></span>
        <button class="tool" aria-label="Position and Size" disabled><svg><use href="#position"/></svg></button>
        <button class="tool" aria-label="Change Anchor" disabled><svg><use href="#anchor"/></svg></button>
        <button class="drop" aria-label="Anchor menu" disabled></button>
        <span class="sep"></span>
        <button class="tool" aria-label="Alignment" disabled><svg><use href="#align"/></svg></button>
        <button class="drop" aria-label="Alignment menu" disabled></button>
        <span class="sep"></span>
        <button class="tool" aria-label="Display Grid"><svg><use href="#grid"/></svg></button>
        <button class="tool" aria-label="Snap to Grid"><svg><use href="#snap"/></svg></button>
        <button class="tool" aria-label="Guides When Moving"><svg><use href="#guides"/></svg></button>
        <button class="more" aria-label="Toolbar options"></button>
      </div>
      <div class="bar drawing">
        <span class="grip"></span>
        <button class="tool" aria-label="Select"><svg><use href="#pointer"/></svg></button>
        <span class="sep"></span>
        <button class="tool" aria-label="Line"><svg><use href="#line"/></svg></button>
        <button class="tool" aria-label="Rectangle"><svg><use href="#rect"/></svg></button>
        <button class="tool" aria-label="Ellipse"><svg><use href="#ellipse"/></svg></button>
        <button class="tool" aria-label="Freeform Line"><svg><use href="#freeform"/></svg></button>
        <button class="tool" aria-label="Text"><svg><use href="#text"/></svg></button>
        <button class="tool" aria-label="Text Callout"><svg><use href="#callout"/></svg></button>
        <span class="sep"></span>
        <button class="tool" aria-label="Basic Shapes"><svg><use href="#diamond"/></svg></button>
        <button class="drop" aria-label="Basic Shapes menu"></button>
        <button class="tool" aria-label="Symbol Shapes"><svg><use href="#smiley"/></svg></button>
        <button class="drop" aria-label="Symbol Shapes menu"></button>
        <button class="tool" aria-label="Block Arrows"><svg><use href="#arrows"/></svg></button>
        <button class="drop" aria-label="Block Arrows menu"></button>
        <button class="tool" aria-label="Flowcharts"><svg><use href="#flow"/></svg></button>
        <button class="drop" aria-label="Flowcharts menu"></button>
        <button class="tool" aria-label="Callouts"><svg><use href="#bubble"/></svg></button>
        <button class="drop" aria-label="Callouts menu"></button>
        <button class="more" aria-label="Toolbar options"></button>
      </div>
    </footer>
  </div>
</div>

</body>
</html>
```
FILE: styles.css
```css
* {
  box-sizing: border-box;
}

body {
  margin: 0;
  overflow: hidden;
  font-family: 'Noto Sans', 'Open Sans', sans-serif;
  font-size: 11px;
  color: #000;
}

button {
  margin: 0;
  padding: 0;
  border: 0;
  background: none;
  font: inherit;
  color: inherit;
}

.sprite {
  display: block;
  width: 0;
  height: 0;
}

/* the window runs a little past the right and bottom screen edges */
.window {
  display: flex;
  flex-direction: column;
  width: calc(100vw + 14px);
  height: calc(100vh + 8px);
  padding: 0 8px 0 6px;
  border-top: 1px solid #2c2a32;
  border-left: 2px solid #17171c;
  border-radius: 6px 0 0 0;
  background: linear-gradient(#97b2d2, #b7cfe9 30px, #b9d2ec 120px);
}

.titlebar {
  display: flex;
  flex: none;
  align-items: center;
  height: 29px;
  padding: 6px 0 0 2px;
}

.titlebar h1 {
  flex: 1;
  margin: 0 0 0 3px;
  font-size: 11px;
  font-weight: normal;
  line-height: 20px;
  white-space: nowrap;
}

.app-icon {
  width: 17px;
  height: 17px;
}

.caption-buttons {
  display: flex;
  gap: 2px;
}

.caption-buttons button {
  display: flex;
  align-items: center;
  justify-content: center;
  width: 31px;
  height: 17px;
  border: 1px solid #5d7187;
  border-radius: 2px;
  background: linear-gradient(#c6d8ea, #b4cae0 50%, #9ab5d0 50%, #b5cde6);
  box-shadow: inset 0 0 0 1px rgba(255, 255, 255, 0.5);
}

.caption-buttons .close {
  padding-right: 1px;
  border-color: #4b1312;
  background: linear-gradient(#e0a095, #cc6c5c 50%, #b43a28 50%, #cf7158);
}

.client {
  display: flex;
  flex: 1;
  flex-direction: column;
  min-height: 0;
  background: #d4d9ee;
}

.menubar {
  display: flex;
  flex: none;
  gap: 13px;
  height: 27px;
  padding: 0 6px;
  border-bottom: 1px solid #c3c3c9;
  background: linear-gradient(#fff, #e4ebf6 9px, #d4daef 9px);
}

.toolbar,
.bar {
  display: flex;
  flex: none;
  align-items: center;
  align-self: flex-start;
}

.toolbar {
  height: 31px;
  padding: 1px 1px 0 3px;
  border: 1px solid #c3c3c9;
  border-width: 0 1px 1px 0;
  box-shadow: inset 0 1px #fff;
}

.formatting {
  background: linear-gradient(#d4d9ee, #dfe5f5);
}

.grip {
  width: 8px;
  height: 19px;
  background: repeating-linear-gradient(#8f939f 0 2px, transparent 2px 4px) 0 0 / 2px 100% no-repeat;
}

.tool {
  display: flex;
  flex: none;
  align-items: center;
  justify-content: center;
  width: 25px;
  height: 25px;
  border: 1px solid transparent;
  border-radius: 3px;
}

.tool svg {
  width: 17px;
  height: 17px;
}

.pressed {
  border-color: #50535f;
  background: #c9cbd6;
  box-shadow: inset 0 0 2px #777b88;
}

.drop {
  width: 11px;
  height: 25px;
}

.drop::before {
  content: '';
  display: block;
  width: 0;
  margin: 0 auto;
  border: 3px solid transparent;
  border-top-color: #000;
  border-bottom: 0;
}

.drop:disabled::before {
  border-top-color: #999;
}

.sep {
  width: 8px;
  height: 14px;
  background: linear-gradient(#b9bbc4, #b9bbc4) 3px 0 / 1px 100% no-repeat;
}

.more {
  display: flex;
  align-items: flex-end;
  justify-content: center;
  width: 10px;
  height: 25px;
  margin-left: 7px;
  padding-bottom: 4px;
  background: linear-gradient(#d9d9db, #9c9c9e);
}

.more::before {
  content: '';
  border: 3px solid transparent;
  border-top-color: #000;
  border-bottom: 0;
}

.combo {
  display: grid;
  height: 23px;
  margin-right: 9px;
  border: 1px solid #abadb3;
  background: #fff;
}

.combo select,
.combo::after {
  grid-area: 1 / 1;
}

.combo select {
  appearance: none;
  width: 100%;
  padding: 0 0 0 3px;
  border: 0;
  background: none;
  font: inherit;
  color: #000;
}

.combo::after {
  content: '';
  justify-self: end;
  width: 17px;
  height: 19px;
  margin: 1px 0;
  border: 1px solid #666;
  background:
    linear-gradient(to bottom left, #000 50%, transparent 51%) 3px 7px / 4px 4px no-repeat,
    linear-gradient(to bottom right, #000 50%, transparent 51%) 7px 7px / 4px 4px no-repeat,
    linear-gradient(#f6f6f6, #d5d5d5);
  pointer-events: none;
}

.combo-style {
  width: 136px;
  margin-left: 9px;
}

.combo-font {
  width: 153px;
}

.combo-size {
  width: 61px;
}

.main {
  display: flex;
  flex: 1;
  min-height: 0;
}

.controls {
  display: flex;
  flex: none;
  flex-direction: column;
  align-items: center;
  gap: 2px;
  width: 40px;
  padding: 4px 2px 0 0;
  background: linear-gradient(to right, #dde2f3, #d4d9ee 10px);
}

.grip-h {
  flex: none;
  width: 26px;
  height: 7px;
  background: repeating-linear-gradient(to right, #8f939f 0 2px, transparent 2px 4px) 0 0 / 100% 2px no-repeat;
}

.more-h {
  flex: none;
  display: flex;
  align-items: center;
  justify-content: flex-end;
  width: 34px;
  height: 10px;
  margin-top: 5px;
  padding-right: 4px;
  background: linear-gradient(to right, #dcdde2, #9c9c9e);
}

.more-h::before {
  content: '';
  border: 3px solid transparent;
  border-left: 4px solid #000;
  border-right: 0;
}

.workspace {
  display: grid;
  flex: 1;
  grid-template-columns: 27px 1fr 17px;
  grid-template-rows: 26px 1fr 18px;
  min-width: 0;
  border: 1px solid #77777b;
  border-width: 2px 0 0 1px;
  background: #efefef;
}

.corner {
  padding: 3px 0 0 4px;
}

.tab-type {
  display: block;
  width: 18px;
  height: 18px;
  border: 1px solid #9b9b9b;
}

.tab-type::before {
  content: '';
  display: block;
  width: 7px;
  height: 6px;
  margin: 3px 0 0 5px;
  border: solid #000;
  border-width: 0 0 2px 2px;
}

.ruler-h,
.ruler-v {
  display: block;
  width: 100%;
  height: 100%;
  shape-rendering: crispEdges;
}

.ruler-text text {
  text-anchor: middle;
  font-size: 12px;
}

.ruler-side {
  min-height: 0;
  padding-bottom: 23px;
}

.scroll-v {
  display: flex;
  grid-area: 1 / 3 / 4 / 4;
  flex-direction: column;
  align-items: center;
  gap: 2px;
  padding: 0 0 20px 1px;
}

.scroll-v .track {
  flex: 1;
  width: 100%;
  background: #e6e6e6;
}

.scroll-v .thumb {
  display: flex;
  align-items: center;
  justify-content: center;
  height: 50%;
  border: 1px solid #8c8c8c;
  border-radius: 2px;
  background: linear-gradient(to right, #f4f4f4, #e4e4e4 50%, #cfcfcf 50%, #d8d8d8);
}

.scroll-v .thumb::before {
  content: '';
  width: 8px;
  height: 8px;
  background: repeating-linear-gradient(#555 0 2px, transparent 2px 3px);
}

.page-nav {
  display: flex;
  align-items: center;
  justify-content: center;
  width: 100%;
  height: 15px;
  border: 1px solid #777;
  border-radius: 3px;
  background: linear-gradient(#fafafa, #dcdcdc);
}

.arrow {
  display: flex;
  flex: none;
  align-items: center;
  justify-content: center;
  width: 16px;
  height: 16px;
}

.arrow::before {
  content: '';
  border: 4px solid transparent;
}

.up::before {
  border-top: 0;
  border-bottom-color: #444;
}

.down::before {
  border-bottom: 0;
  border-top-color: #444;
}

.left::before {
  border-left: 0;
  border-right-color: #333;
}

.right::before {
  border-right: 0;
  border-left-color: #333;
}

.scroll-h {
  display: flex;
  grid-column: 1 / 3;
  align-items: center;
  padding-left: 2px;
  background: #ececec;
}

.scroll-h .track {
  flex: 1;
}

.scroll-h .thumb {
  display: flex;
  align-items: center;
  justify-content: center;
  width: 79%;
  height: 15px;
  border: 1px solid #8c8c8c;
  border-radius: 2px;
  background: linear-gradient(#f4f4f4, #e4e4e4 50%, #c8c8c8 50%, #d8d8d8);
}

.scroll-h .thumb::before {
  content: '';
  width: 8px;
  height: 7px;
  background: repeating-linear-gradient(to right, #555 0 2px, transparent 2px 3px);
}

.document {
  position: relative;
  display: flex;
  flex-direction: column;
  gap: 19px;
  min-width: 0;
  min-height: 0;
  overflow: hidden;
  padding: 39px 0 0 77px;
  border: solid #000;
  border-width: 1px 0 0 1px;
  background: #fff;
}

.report-title {
  flex: none;
  height: 47px;
  margin: 0;
  border: 1px solid #bfbfbf;
  border-right: 0;
  font-family: 'Liberation Sans', Arial, sans-serif;
  font-size: 42px;
  font-style: italic;
  font-weight: normal;
  line-height: 42px;
}

.misspelled,
.sample i {
  text-decoration: underline wavy #e00000 1px;
  text-decoration-skip-ink: none;
  text-underline-offset: 1px;
}

.report-body {
  flex: 1;
  min-width: 0;
  padding-top: 17px;
  border: solid #bfbfbf;
  border-width: 1px 0 0 1px;
}

.records {
  width: 921px;
  table-layout: fixed;
  border-collapse: collapse;
  font-family: 'Liberation Sans', Arial, sans-serif;
  font-size: 16px;
  line-height: 18px;
}

.records col {
  width: 182px;
}

.records .indent-col {
  width: 193px;
}

.records th,
.records td {
  padding: 0 2px 0 3px;
  border: 1px solid #000;
  border-top-color: #bfbfbf;
  text-align: left;
  vertical-align: top;
}

.records th {
  font-family: 'Liberation Serif', 'Times New Roman', serif;
  font-style: italic;
  line-height: 17px;
}

.records th span {
  display: block;
  width: fit-content;
  padding-right: 1px;
  background: #c0c0c0;
}

.records .sample td {
  border-top-color: #000;
  border-bottom-color: #bfbfbf;
}

.records .blank,
.records th:nth-child(2),
.records .sample td:first-child {
  border-left-color: #bfbfbf;
}

.records .blank {
  border-color: #bfbfbf;
  border-left: 0;
}

.sample i {
  font-style: normal;
}

.text-cursor {
  position: absolute;
  left: 350px;
  top: 266px;
}

.bottombars {
  display: flex;
  flex: none;
  height: 30px;
  border-top: 1px solid #c3c3c9;
  background: linear-gradient(#fff, #e6ebf7 10px, #d4daee 10px);
}

.bottombars .bar {
  height: 29px;
  padding-left: 3px;
}

.bottombars .drawing {
  flex: 1;
  border-left: 1px solid #b9bbc4;
}

.drawing .more {
  margin-left: auto;
}
```
